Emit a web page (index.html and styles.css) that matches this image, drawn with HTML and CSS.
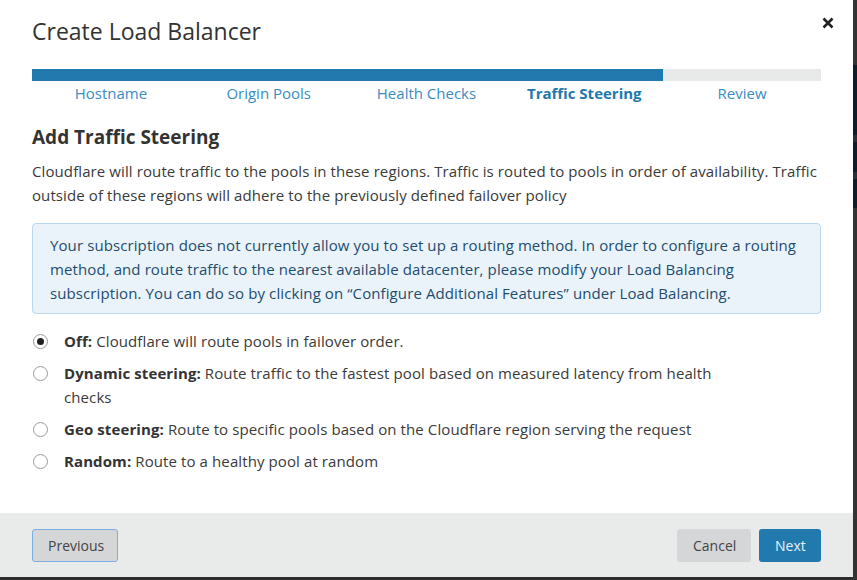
FILE: index.html
```html
<!DOCTYPE html>
<html>
<head>
<meta charset="utf-8">
<link rel="stylesheet" href="styles.css">
</head>
<body>
<div class="screen">
  <div class="modal">
    <div class="header">
      <h1 class="title">Create Load Balancer</h1>
      <svg class="close" width="12" height="12" viewBox="0 0 12 12"><path d="M1.5 1.5 L10.5 10.5 M10.5 1.5 L1.5 10.5" stroke="#222" stroke-width="2.6" stroke-linecap="butt"/></svg>
    </div>
    <div class="body">
      <div class="progress"><div class="progress-fill"></div></div>
      <div class="steps">
        <span class="step">Hostname</span>
        <span class="step">Origin Pools</span>
        <span class="step">Health Checks</span>
        <span class="step active">Traffic Steering</span>
        <span class="step">Review</span>
      </div>
      <h2 class="section-title">Add Traffic Steering</h2>
      <p class="desc">Cloudflare will route traffic to the pools in these regions. Traffic is routed to pools in order of availability. Traffic outside of these regions will adhere to the previously defined failover policy</p>
      <div class="info">Your subscription does not currently allow you to set up a routing method. In order to configure a routing method, and route traffic to the nearest available datacenter, please modify your Load Balancing subscription. You can do so by clicking on “Configure Additional Features” under Load Balancing.</div>
      <ul class="options">
        <li class="option"><span class="radio checked"></span><span class="label"><b>Off:</b> Cloudflare will route pools in failover order.</span></li>
        <li class="option"><span class="radio"></span><span class="label"><b>Dynamic steering:</b> Route traffic to the fastest pool based on measured latency from health checks</span></li>
        <li class="option"><span class="radio"></span><span class="label"><b>Geo steering:</b> Route to specific pools based on the Cloudflare region serving the request</span></li>
        <li class="option"><span class="radio"></span><span class="label"><b>Random:</b> Route to a healthy pool at random</span></li>
      </ul>
    </div>
    <div class="footer">
      <button class="btn btn-prev">Previous</button>
      <div class="footer-right">
        <button class="btn btn-cancel">Cancel</button>
        <button class="btn btn-next">Next</button>
      </div>
    </div>
  </div>
  <div class="backdrop">
    <div class="bd bd-a"></div>
    <div class="bd bd-navy1"></div>
    <div class="bd bd-b"></div>
    <div class="bd bd-navy2"></div>
    <div class="bd bd-b"></div>
    <div class="bd bd-navy3"></div>
    <div class="bd bd-rest"></div>
  </div>
</div>
</body>
</html>
```
FILE: styles.css
```css
* { box-sizing: border-box; }
html, body {
  margin: 0;
  padding: 0;
  width: 857px;
  height: 580px;
  overflow: hidden;
  background: #2e2e2e;
  font-family: "Open Sans", "Noto Sans", sans-serif;
}
.screen {
  display: flex;
  width: 857px;
  height: 580px;
}
.modal {
  width: 853px;
  height: 577px;
  background: #fff;
  display: flex;
  flex-direction: column;
  flex: none;
}
.header {
  display: flex;
  justify-content: space-between;
  align-items: flex-start;
  padding: 14px 19px 0 32px;
  height: 69px;
}
.title {
  margin: 0;
  font-weight: 400;
  font-size: 23px;
  line-height: 34px;
  color: #333;
}
.close {
  display: block;
  margin-top: 3px;
}
.body {
  padding: 0 32px;
  flex: 1;
}
.progress {
  height: 12px;
  background: #e8eaea;
}
.progress-fill {
  width: 631px;
  height: 100%;
  background: #2279ad;
}
.steps {
  display: grid;
  grid-template-columns: repeat(5, 1fr);
  text-align: center;
  font-size: 15px;
  line-height: 24px;
  color: #3a8cc2;
}
.step.active {
  font-weight: 700;
  color: #2178ad;
}
.section-title {
  margin: 18px 0 0;
  font-size: 19px;
  line-height: 28px;
  font-weight: 700;
  color: #333;
}
.desc {
  margin: 8px 0 0;
  font-size: 15px;
  line-height: 24px;
  letter-spacing: 0.1px;
  color: #3a3a3a;
}
.info {
  margin-top: 16px;
  background: #ebf3fa;
  border: 1px solid #b9d7ee;
  border-radius: 4px;
  padding: 9px 17px 8px;
  font-size: 15px;
  line-height: 24px;
  letter-spacing: 0.1px;
  color: #1d4d6e;
}
.options {
  list-style: none;
  margin: 15px 0 0;
  padding: 0;
  display: flex;
  flex-direction: column;
  gap: 8px;
}
.option {
  display: flex;
  align-items: flex-start;
  font-size: 15px;
  line-height: 24px;
  letter-spacing: 0.1px;
  color: #3a3a3a;
}
.option b { color: #333; }
.radio {
  flex: none;
  width: 15px;
  height: 15px;
  border: 1px solid #9a9a9a;
  border-radius: 50%;
  margin: 5px 16px 0 1px;
  display: flex;
  align-items: center;
  justify-content: center;
  background: #fff;
}
.radio.checked::after {
  content: "";
  width: 7px;
  height: 7px;
  border-radius: 50%;
  background: #222;
}
.label { max-width: 650px; }
.footer {
  height: 64px;
  background: #e9eaea;
  display: flex;
  justify-content: space-between;
  align-items: flex-start;
  padding: 16px 32px 0;
}
.footer-right {
  display: flex;
  gap: 8px;
}
.btn {
  font-family: inherit;
  font-size: 14px;
  height: 33px;
  border-radius: 3px;
  border: 1px solid transparent;
  padding: 0 15px;
  cursor: pointer;
}
.btn-prev {
  width: 86px;
  background: #d5d6d8;
  border-color: #7daee3;
  color: #444;
}
.btn-cancel {
  width: 74px;
  background: #d5d6d8;
  color: #444;
}
.btn-next {
  width: 62px;
  background: #2279ad;
  color: #e6f1f9;
}
.backdrop {
  flex: 1;
  display: flex;
  flex-direction: column;
}
.bd-a { height: 65px; background: #333; }
.bd-navy1 { height: 70px; background: #0f1d2a; }
.bd-b { height: 7px; background: #2a2f35; }
.bd-navy2 { height: 30px; background: #0f1d2a; }
.bd-navy3 { height: 29px; background: #0f1d2a; }
.bd-rest { flex: 1; background: #333; }
```
